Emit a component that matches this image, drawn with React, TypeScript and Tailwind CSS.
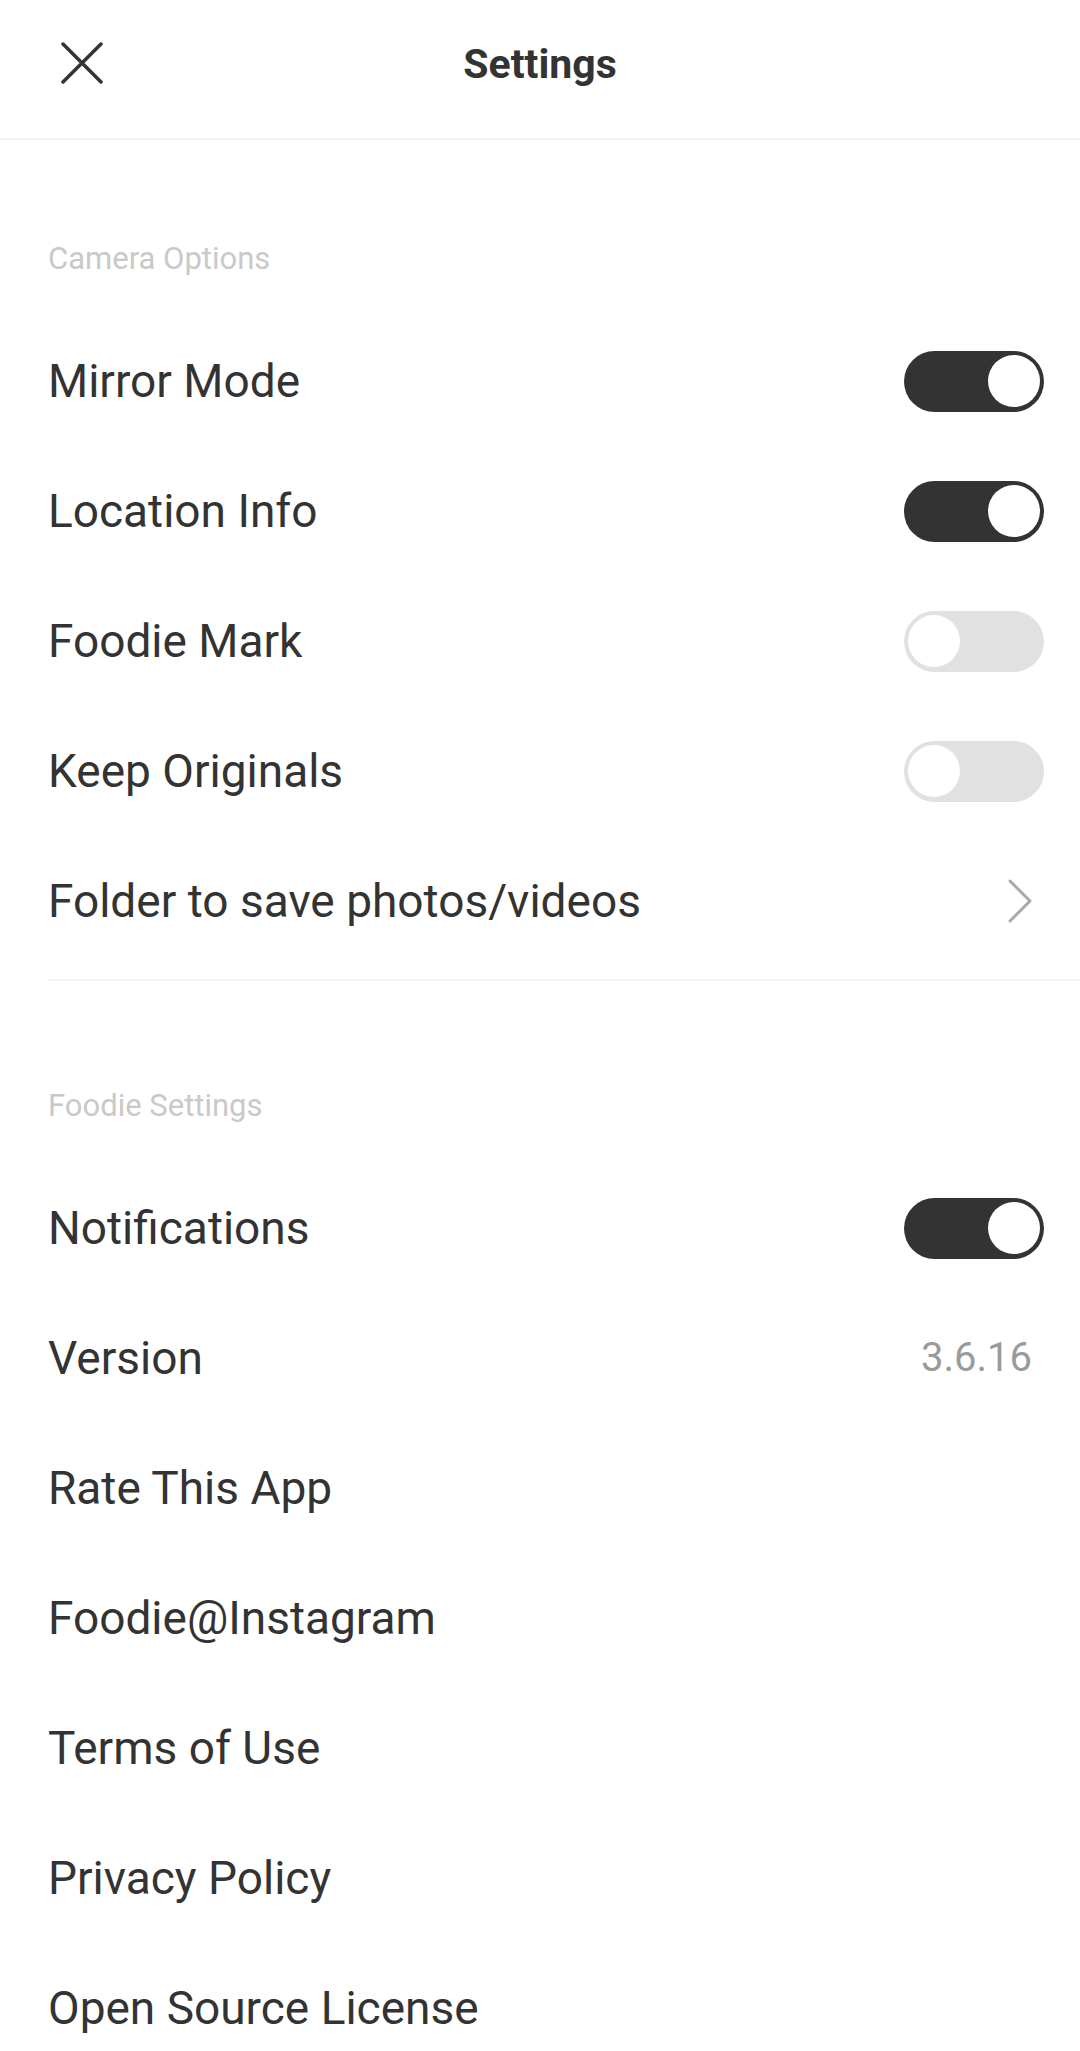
import React from "react";

type Row =
  | { label: string; kind: "toggle"; on: boolean }
  | { label: string; kind: "chevron" }
  | { label: string; kind: "value"; value: string }
  | { label: string; kind: "plain" };

const cameraRows: Row[] = [
  { label: "Mirror Mode", kind: "toggle", on: true },
  { label: "Location Info", kind: "toggle", on: true },
  { label: "Foodie Mark", kind: "toggle", on: false },
  { label: "Keep Originals", kind: "toggle", on: false },
  { label: "Folder to save photos/videos", kind: "chevron" },
];

const foodieRows: Row[] = [
  { label: "Notifications", kind: "toggle", on: true },
  { label: "Version", kind: "value", value: "3.6.16" },
  { label: "Rate This App", kind: "plain" },
  { label: "Foodie@Instagram", kind: "plain" },
  { label: "Terms of Use", kind: "plain" },
  { label: "Privacy Policy", kind: "plain" },
  { label: "Open Source License", kind: "plain" },
];

const Toggle = ({ on }: { on: boolean }) => (
  <div
    className={
      "w-[140px] h-[61px] rounded-full flex items-center px-[4px] " +
      (on ? "bg-[#333333] justify-end" : "bg-[#e1e1e1] justify-start")
    }
  >
    <div className="w-[52px] h-[52px] rounded-full bg-white" />
  </div>
);

const Chevron = () => (
  <svg width="28" height="46" viewBox="0 0 28 46" className="mr-[10px]">
    <path
      d="M4 3 L24 23 L4 43"
      fill="none"
      stroke="#a8a8a8"
      strokeWidth="3"
      strokeLinecap="round"
      strokeLinejoin="round"
    />
  </svg>
);

const SettingRow = ({ row }: { row: Row }) => (
  <div className="h-[130px] flex items-center justify-between pl-[48px] pr-[36px]">
    <span className="text-[46px] leading-none text-[#333333]">{row.label}</span>
    {row.kind === "toggle" && <Toggle on={row.on} />}
    {row.kind === "chevron" && <Chevron />}
    {row.kind === "value" && (
      <span className="text-[40px] leading-none text-[#9a9a9a] mr-[12px]">
        {row.value}
      </span>
    )}
  </div>
);

const SectionLabel = ({ text, top }: { text: string; top: string }) => (
  <div className={top + " pb-[39px] pl-[48px]"}>
    <p className="text-[31px] leading-[36px] text-[#c9c9c9]">{text}</p>
  </div>
);

const App = () => {
  return (
    <div
      className="w-[1080px] min-h-[2051px] bg-white overflow-hidden"
      style={{ fontFamily: "Roboto, 'Noto Sans', sans-serif" }}
    >
      <div className="h-[140px] border-b-2 border-[#f3f3f3] flex items-center relative">
        <div className="pl-[61px] mb-[12px] flex">
          <svg width="42" height="42" viewBox="0 0 42 42">
            <path
              d="M2 2 L40 40 M40 2 L2 40"
              stroke="#333333"
              strokeWidth="3.5"
              strokeLinecap="round"
            />
          </svg>
        </div>
        <h1 className="absolute left-0 right-0 top-[40px] leading-[48px] text-center text-[41px] font-bold text-[#333333] pointer-events-none">
          Settings
        </h1>
      </div>

      <SectionLabel text="Camera Options" top="pt-[101px]" />
      {cameraRows.map((r) => (
        <SettingRow key={r.label} row={r} />
      ))}
      <div className="mt-[13px] ml-[48px] h-[2px] bg-[#f3f3f3]" />

      <SectionLabel text="Foodie Settings" top="pt-[107px]" />
      {foodieRows.map((r) => (
        <SettingRow key={r.label} row={r} />
      ))}
    </div>
  );
};

export default App;
